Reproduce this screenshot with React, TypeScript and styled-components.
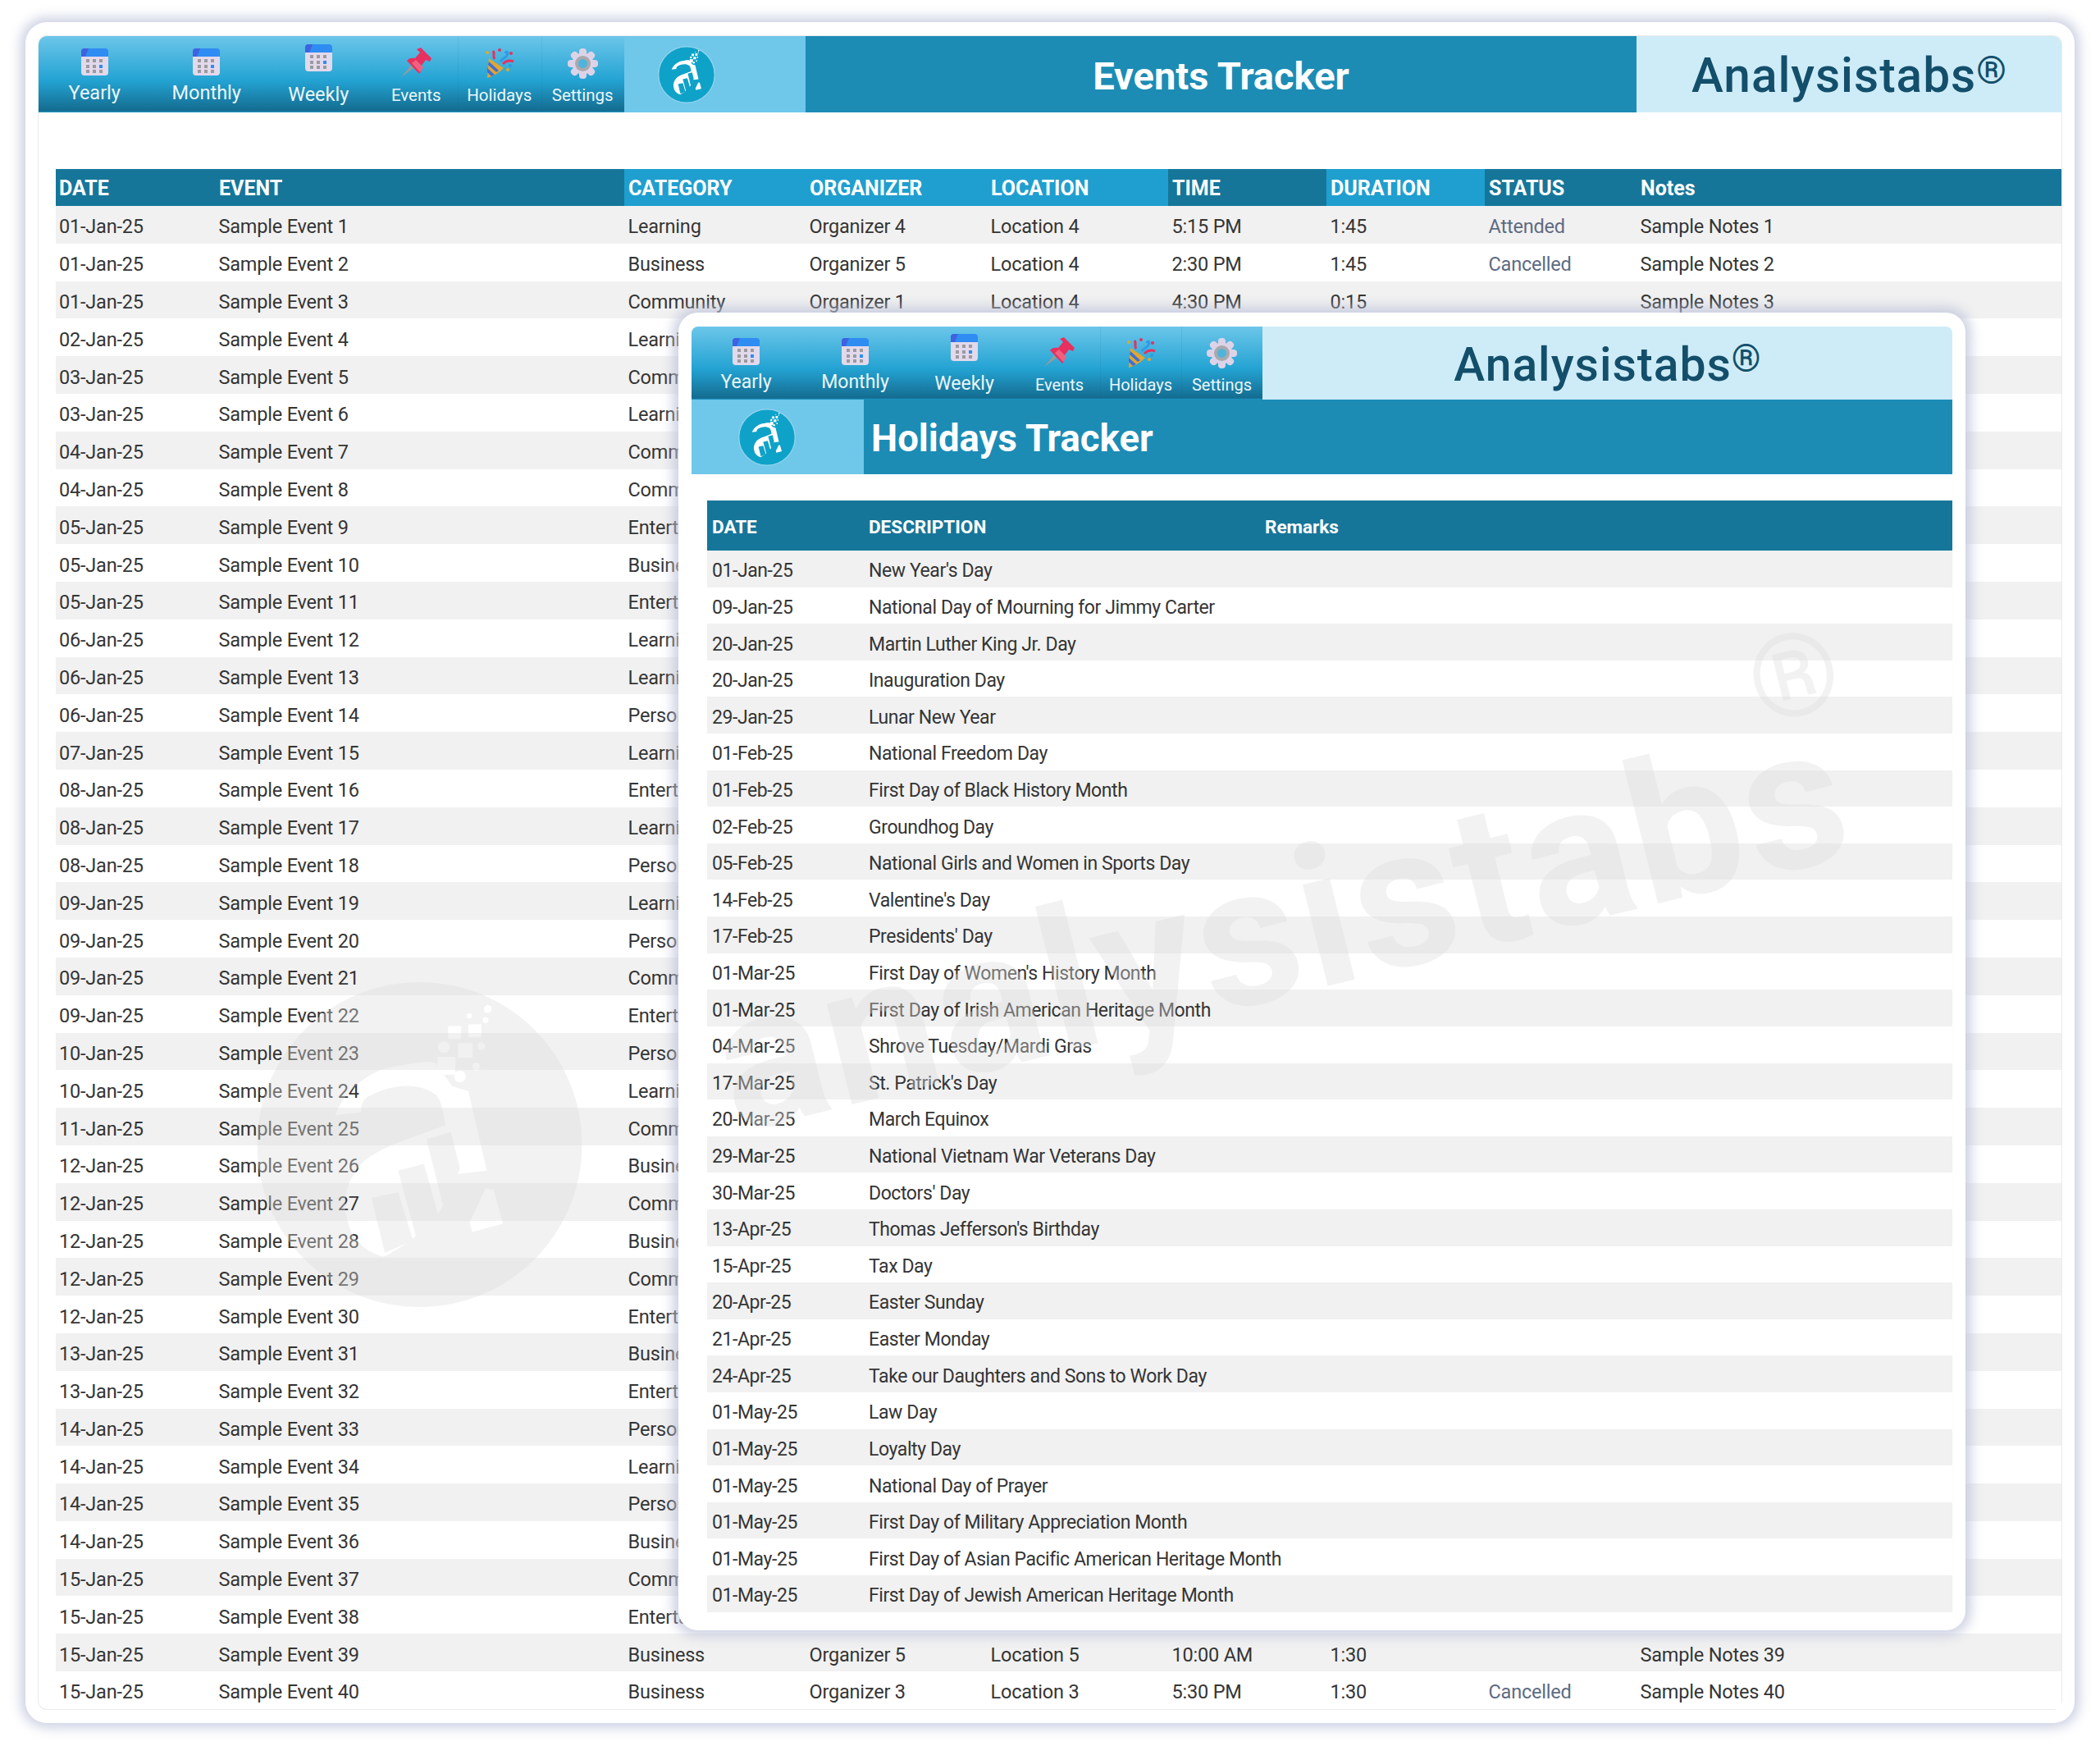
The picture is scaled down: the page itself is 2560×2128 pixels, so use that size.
import React from 'react'
import styled, { createGlobalStyle } from 'styled-components'

const GlobalStyle = createGlobalStyle`
  html, body {
    margin: 0;
    background: #fff;
  }
  body {
    font-family: Roboto, "Liberation Sans", sans-serif;
    color: #353535;
  }
`

type EventRow = {
  date: string
  category: string
  organizer?: string
  location?: string
  time?: string
  duration?: string
  status?: string
  notes?: string
}

const days = [1, 1, 1, 2, 3, 3, 4, 4, 5, 5, 5, 6, 6, 6, 7, 8, 8, 8, 9, 9, 9, 9, 10, 10, 11, 12, 12, 12, 12, 12, 13, 13, 14, 14, 14, 14, 15, 15, 15, 15]
const cats = 'L B C L C L C C E B E L L P L E L P L P C E P L C B C B C E B E P L P B C E B B'.split(' ')
const catNames: Record<string, string> = { L: 'Learning', B: 'Business', C: 'Community', E: 'Entertainment', P: 'Personal' }

const visibleRows: Record<number, Partial<EventRow>> = {
  0: { organizer: 'Organizer 4', location: 'Location 4', time: '5:15 PM', duration: '1:45', status: 'Attended', notes: 'Sample Notes 1' },
  1: { organizer: 'Organizer 5', location: 'Location 4', time: '2:30 PM', duration: '1:45', status: 'Cancelled', notes: 'Sample Notes 2' },
  2: { organizer: 'Organizer 1', location: 'Location 4', time: '4:30 PM', duration: '0:15', notes: 'Sample Notes 3' },
  38: { organizer: 'Organizer 5', location: 'Location 5', time: '10:00 AM', duration: '1:30', notes: 'Sample Notes 39' },
  39: { organizer: 'Organizer 3', location: 'Location 3', time: '5:30 PM', duration: '1:30', status: 'Cancelled', notes: 'Sample Notes 40' },
}

const events: EventRow[] = days.map((d, i) => ({
  date: `${String(d).padStart(2, '0')}-Jan-25`,
  category: catNames[cats[i]],
  ...visibleRows[i],
}))

const holidays: [string, string][] = [
  ['01-Jan-25', "New Year's Day"],
  ['09-Jan-25', 'National Day of Mourning for Jimmy Carter'],
  ['20-Jan-25', 'Martin Luther King Jr. Day'],
  ['20-Jan-25', 'Inauguration Day'],
  ['29-Jan-25', 'Lunar New Year'],
  ['01-Feb-25', 'National Freedom Day'],
  ['01-Feb-25', 'First Day of Black History Month'],
  ['02-Feb-25', 'Groundhog Day'],
  ['05-Feb-25', 'National Girls and Women in Sports Day'],
  ['14-Feb-25', "Valentine's Day"],
  ['17-Feb-25', "Presidents' Day"],
  ['01-Mar-25', "First Day of Women's History Month"],
  ['01-Mar-25', 'First Day of Irish American Heritage Month'],
  ['04-Mar-25', 'Shrove Tuesday/Mardi Gras'],
  ['17-Mar-25', "St. Patrick's Day"],
  ['20-Mar-25', 'March Equinox'],
  ['29-Mar-25', 'National Vietnam War Veterans Day'],
  ['30-Mar-25', "Doctors' Day"],
  ['13-Apr-25', "Thomas Jefferson's Birthday"],
  ['15-Apr-25', 'Tax Day'],
  ['20-Apr-25', 'Easter Sunday'],
  ['21-Apr-25', 'Easter Monday'],
  ['24-Apr-25', 'Take our Daughters and Sons to Work Day'],
  ['01-May-25', 'Law Day'],
  ['01-May-25', 'Loyalty Day'],
  ['01-May-25', 'National Day of Prayer'],
  ['01-May-25', 'First Day of Military Appreciation Month'],
  ['01-May-25', 'First Day of Asian Pacific American Heritage Month'],
  ['01-May-25', 'First Day of Jewish American Heritage Month'],
]

// icons

const CalendarIcon = () => (
  <svg width="33" height="33" viewBox="0 0 33 33">
    <rect x="0" y="2" width="33" height="31" rx="4" fill="#e2d9ec" />
    <path d="M0 10V4a4 4 0 0 1 4-4h25a4 4 0 0 1 4 4v6z" fill="#2f8cf2" />
    <path d="M0 10V4a4 4 0 0 1 4-4h5L5 10z" fill="#3f63e0" />
    {[8, 15, 21].map(cy =>
      [8, 16, 24].map(cx => (
        <rect
          key={`${cx}-${cy}`}
          x={cx - 2}
          y={cy + 5}
          width="4"
          height="4"
          fill={cx === 24 && cy === 15 ? '#2f8cf2' : '#9b9b9f'}
        />
      ))
    )}
  </svg>
)

const PinIcon = () => (
  <svg width="37" height="37" viewBox="0 0 37 37">
    <path d="M0 36l12-14 3 3z" fill="#9a9a9a" />
    <path d="M19 2l5-2 13 13-2 4-5-2-6 8c1 4 0 7-2 9L7 16c2-3 6-4 10-3l6-7z" fill="#e8305f" />
    <path d="M13 19l5-4 9 9-4 6z" fill="#f0617f" />
  </svg>
)

const PartyIcon = () => (
  <svg width="36" height="38" viewBox="0 0 36 38">
    <path d="M5 13l18 12c-6 6-13 10-20 12z" fill="#e4a62e" />
    <path d="M3 25l9 8-4 2-5-5zM5 17l12 11-3 2L4 21z" fill="#3d6fd8" />
    <path d="M12 14c-3-4 1-6-2-10" stroke="#e8305f" strokeWidth="3" fill="none" />
    <path d="M19 17c2-4 8-4 9-10 0-2-2-3-3 0" stroke="#2f9be8" strokeWidth="3" fill="none" />
    <path d="M22 20c4-4 8-5 13-3" stroke="#e8305f" strokeWidth="3" fill="none" />
    <circle cx="3" cy="6" r="2" fill="#e4a62e" />
    <circle cx="28" cy="27" r="2" fill="#e4a62e" />
    <circle cx="18" cy="3" r="2" fill="#e8305f" />
    <circle cx="32" cy="7" r="2" fill="#e8305f" />
    <circle cx="31" cy="22" r="2" fill="#2f9be8" />
  </svg>
)

const GearIcon = () => (
  <svg width="37" height="37" viewBox="0 0 37 37">
    {[0, 45, 90, 135, 180, 225, 270, 315].map(a => (
      <rect key={a} x="14" y="0" width="9" height="12" rx="4" fill="#ddd3e8" transform={`rotate(${a} 18.5 18.5)`} />
    ))}
    <circle cx="18.5" cy="18.5" r="13" fill="#ddd3e8" />
    <circle cx="18.5" cy="18.5" r="9.5" fill="#a9a9ad" />
    <circle cx="18.5" cy="18.5" r="5.5" fill="#4fb4dc" />
  </svg>
)

// the "a" of the logo, on a 100x100 circle; gap is what shows through the chart bars
const LogoGlyph = ({ fill, gap }: { fill: string; gap: string }) => (
  <g>
    <path
      d="M24 41C27 33 35 27 42 26C48 25 53 24 55 25L60 32L65 33.6L70.7 58L62 59L60.8 60.5C58 72 48 80 39 84.5C33 83 29 79 28 74C26 68 27 62 32 56C36 52 44 49 50 47L58 44C57 38 56 35 54.6 34.4C50 31 42 31 34.7 35C32 36 32 39 32 40Z"
      fill={fill}
    />
    <path d="M35.2 66.4L43.4 64.7L48 79.5L39.3 83.3Z" fill={gap} />
    <path d="M43.4 58L51.3 55.9L56.2 73.1L49.2 79.5Z" fill={gap} />
    <path d="M52.1 48.3L59.6 46.2L62.4 57.2L57.9 71.5Z" fill={gap} />
    <path d="M70.3 63.5L72.8 63.9L75.7 74.4L66.2 76.9L65.4 74Z" fill={fill} />
    <g fill={fill}>
      <rect x="58.8" y="13.5" width="4" height="4" />
      <rect x="65" y="13" width="4" height="4" />
      <rect x="61.8" y="18.8" width="4.5" height="4.5" />
      <rect x="55.5" y="23" width="5.5" height="5.5" />
      <circle cx="57.5" cy="20" r="1.8" />
      <circle cx="62.4" cy="29" r="1.8" />
      <circle cx="69" cy="19.7" r="1.2" />
      <circle cx="67.4" cy="26" r="1.2" />
      <circle cx="70.3" cy="11.7" r="0.9" />
      <circle cx="65.3" cy="10.4" r="0.8" />
      <circle cx="71" cy="8.3" r="1.2" />
    </g>
  </g>
)

const Logo = ({ $inset }: { $inset: number }) => (
  <LogoMark $inset={$inset} width="70" height="70" viewBox="0 0 100 100">
    <circle cx="50" cy="50" r="49" fill="#0fa2c9" stroke="#8fd3ec" strokeWidth="2" />
    <LogoGlyph fill="#fff" gap="#0fa2c9" />
  </LogoMark>
)

// layout

const Card = styled.div`
  position: relative;
  box-sizing: border-box;
  width: 2498px;
  height: 2073px;
  margin: 27px 0 28px 31px;
  padding: 17px 16px;
  background: #fff;
  border-radius: 26px;
  box-shadow: 0 0 14px 6px rgba(190, 195, 218, 0.75);
`

const Sheet = styled.div`
  height: 100%;
  border-radius: 10px;
  box-shadow: 0 0 0 1px #ececec;
`

const Banner = styled.div`
  display: flex;
  height: 93px;
  border-radius: 10px 10px 0 0;
  overflow: hidden;
`

const NavBar = styled.nav<{ $cols: string; $height: number }>`
  display: grid;
  grid-template-columns: ${p => p.$cols};
  height: ${p => p.$height}px;
  flex: none;
  background: linear-gradient(180deg, #6cc6e9 0%, #23a3d3 58%, #146c90 98%, #1f9fcf 100%);
`

const NavItem = styled.div<{ $top: number; $gap: number; $size: number; $divider?: boolean }>`
  display: flex;
  flex-direction: column;
  align-items: center;
  padding-top: ${p => p.$top}px;
  color: #eaf6fb;
  font-size: ${p => p.$size}px;
  line-height: 26px;
  box-shadow: ${p => (p.$divider ? 'inset 1px 0 0 rgba(20, 90, 125, 0.1)' : 'none')};
  svg {
    display: block;
    margin-bottom: ${p => p.$gap}px;
  }
`

const LogoPanel = styled.div<{ $width: number }>`
  display: flex;
  align-items: center;
  width: ${p => p.$width}px;
  flex: none;
  background: #6fc7ea;
`

const LogoMark = styled.svg<{ $inset: number }>`
  display: block;
  margin-left: ${p => p.$inset}px;
`

const TitleBar = styled.div<{ $center?: boolean; $size: number }>`
  flex: 1;
  display: flex;
  align-items: center;
  justify-content: ${p => (p.$center ? 'center' : 'flex-start')};
  padding: 3px 0 0 ${p => (p.$center ? 0 : 9)}px;
  background: #1c8cb5;
  color: #fff;
  font-size: ${p => p.$size}px;
  font-weight: 700;
`

const BrandBar = styled.div<{ $size: number; $width?: number }>`
  flex: ${p => (p.$width ? `0 0 ${p.$width}px` : '1')};
  display: flex;
  align-items: center;
  justify-content: center;
  padding-top: 3px;
  background: #ceecf8;
  color: #134f6b;
  font-size: ${p => p.$size}px;
  font-weight: 500;
  letter-spacing: 1px;
`

const BrandSign = styled.span`
  font-size: 0.8em;
  font-weight: 700;
  position: relative;
  top: -0.22em;
  letter-spacing: 0;
`

const EventTable = styled.div`
  margin: 69px 0 0 21px;
`

const eventCols = '194px 499px 221px 221px 221px 193px 193px 185px 1fr'

const EventHead = styled.div`
  display: grid;
  grid-template-columns: ${eventCols};
  height: 45px;
`

const HeadCell = styled.div<{ $light?: boolean; $pad?: number }>`
  display: flex;
  align-items: center;
  padding: 1px 0 0 ${p => p.$pad ?? 5}px;
  background: ${p => (p.$light ? '#1f9fcf' : '#16769a')};
  color: #fff;
  font-size: 25px;
  font-weight: 700;
  white-space: nowrap;
`

const EventLine = styled.div<{ $odd: boolean }>`
  display: grid;
  grid-template-columns: ${eventCols};
  height: 45.8px;
  padding-top: 5px;
  box-sizing: border-box;
  align-items: center;
  background: ${p => (p.$odd ? '#f1f1f1' : '#fff')};
`

const Cell = styled.div<{ $muted?: boolean; $pad?: number }>`
  padding-left: ${p => p.$pad ?? 4.5}px;
  color: ${p => (p.$muted ? '#5d6b82' : '#353535')};
  font-size: 23.5px;
  letter-spacing: -0.2px;
  white-space: nowrap;
`

const Popup = styled.div`
  position: absolute;
  left: 796px;
  top: 354px;
  box-sizing: border-box;
  width: 1569px;
  height: 1606px;
  padding: 17px 16px;
  background: #fff;
  border-radius: 24px;
  box-shadow: 0 0 14px 7px rgba(190, 195, 218, 0.75);
`

const PopupTop = styled.div`
  display: flex;
  height: 89px;
  border-radius: 8px 8px 0 0;
  overflow: hidden;
`

const PopupTitle = styled.div`
  display: flex;
  height: 91px;
`

const HolidayTable = styled.div`
  margin: 32px 0 0 19px;
`

const holidayCols = '191px 483px 1fr'

const HolidayHead = styled.div`
  display: grid;
  grid-template-columns: ${holidayCols};
  align-items: center;
  height: 61px;
  padding-top: 2px;
  box-sizing: border-box;
  background: #16769a;
  color: #fff;
  font-size: 22.5px;
  font-weight: 700;
  > div {
    padding-left: 6px;
  }
`

const HolidayLine = styled.div<{ $odd: boolean }>`
  display: grid;
  grid-template-columns: ${holidayCols};
  align-items: center;
  height: 44.62px;
  box-sizing: border-box;
  padding-top: 5px;
  background: ${p => (p.$odd ? '#f1f1f1' : '#fff')};
  font-size: 23px;
  letter-spacing: -0.42px;
  white-space: nowrap;
  > div {
    padding-left: 6px;
  }
`

const WatermarkLogo = styled.svg`
  position: absolute;
  left: 279px;
  top: 1170px;
  width: 403px;
  height: 396px;
  pointer-events: none;
`

const WatermarkText = styled.div`
  position: absolute;
  left: 1532px;
  top: 1104px;
  transform: translate(-50%, -50%) rotate(-14deg);
  color: rgba(222, 222, 222, 0.38);
  font-size: 240px;
  font-weight: 700;
  letter-spacing: 5px;
  line-height: 1;
  white-space: nowrap;
  pointer-events: none;
`

const WatermarkMark = styled.div`
  position: absolute;
  left: 2156px;
  top: 797px;
  transform: translate(-50%, -50%) rotate(-14deg);
  color: rgba(222, 222, 222, 0.38);
  font-size: 140px;
  line-height: 1;
  pointer-events: none;
`

type NavProps = { big: number; small: number; compact?: boolean }

const Nav = ({ big, small, compact }: NavProps) => {
  const labelSize = compact ? 23 : 23.5
  const smallSize = compact ? 20 : 20.5
  const shift = compact ? 1 : 0
  return (
    <NavBar $cols={`repeat(3, ${big}px) repeat(3, ${small}px)`} $height={compact ? 89 : 93}>
      <NavItem $top={15 - shift} $gap={8} $size={labelSize}><CalendarIcon />Yearly</NavItem>
      <NavItem $top={15 - shift} $gap={8} $size={labelSize}><CalendarIcon />Monthly</NavItem>
      <NavItem $top={10 - shift} $gap={15} $size={labelSize}><CalendarIcon />Weekly</NavItem>
      <NavItem $top={14 - shift} $gap={8} $size={smallSize}><PinIcon />Events</NavItem>
      <NavItem $top={14 - shift} $gap={7} $size={smallSize} $divider><PartyIcon />Holidays</NavItem>
      <NavItem $top={15 - shift} $gap={7} $size={smallSize} $divider><GearIcon />Settings</NavItem>
    </NavBar>
  )
}

const eventKeys = ['organizer', 'location', 'time', 'duration'] as const

const App = () => {
  return (
    <>
      <GlobalStyle />
      <Card>
        <Sheet>
          <Banner>
            <Nav big={136.5} small={101.5} />
            <LogoPanel $width={221}><Logo $inset={41} /></LogoPanel>
            <TitleBar $center $size={47}>Events Tracker</TitleBar>
            <BrandBar $size={58.5} $width={518}><span>Analysistabs<BrandSign>®</BrandSign></span></BrandBar>
          </Banner>

          <EventTable>
            <EventHead>
              <HeadCell $pad={4}>DATE</HeadCell>
              <HeadCell>EVENT</HeadCell>
              <HeadCell $light>CATEGORY</HeadCell>
              <HeadCell $light>ORGANIZER</HeadCell>
              <HeadCell $light>LOCATION</HeadCell>
              <HeadCell>TIME</HeadCell>
              <HeadCell $light>DURATION</HeadCell>
              <HeadCell>STATUS</HeadCell>
              <HeadCell>Notes</HeadCell>
            </EventHead>
            {events.map((row, i) => (
              <EventLine key={i} $odd={i % 2 === 0}>
                <Cell $pad={4}>{row.date}</Cell>
                <Cell>Sample Event {i + 1}</Cell>
                <Cell>{row.category}</Cell>
                {eventKeys.map(k => (
                  <Cell key={k}>{row[k]}</Cell>
                ))}
                <Cell $muted>{row.status}</Cell>
                <Cell>{row.notes}</Cell>
              </EventLine>
            ))}
          </EventTable>
        </Sheet>

        <Popup>
          <PopupTop>
            <Nav big={133} small={99} compact />
            <BrandBar $size={57}><span>Analysistabs<BrandSign>®</BrandSign></span></BrandBar>
          </PopupTop>
          <PopupTitle>
            <LogoPanel $width={210}><Logo $inset={57} /></LogoPanel>
            <TitleBar $size={45.5}>Holidays Tracker</TitleBar>
          </PopupTitle>
          <HolidayTable>
            <HolidayHead>
              <div>DATE</div>
              <div>DESCRIPTION</div>
              <div>Remarks</div>
            </HolidayHead>
            {holidays.map(([date, name], i) => (
              <HolidayLine key={i} $odd={i % 2 === 0}>
                <div>{date}</div>
                <div>{name}</div>
              </HolidayLine>
            ))}
          </HolidayTable>
        </Popup>

        <WatermarkLogo viewBox="0 0 100 100">
          <defs>
            <mask id="wm">
              <rect width="100" height="100" fill="#fff" />
              <LogoGlyph fill="#000" gap="#fff" />
            </mask>
          </defs>
          <circle cx="50" cy="50" r="50" fill="rgba(222,222,222,0.38)" mask="url(#wm)" />
        </WatermarkLogo>
        <WatermarkText>analysistabs</WatermarkText>
        <WatermarkMark>®</WatermarkMark>
      </Card>
    </>
  )
}

export default App
